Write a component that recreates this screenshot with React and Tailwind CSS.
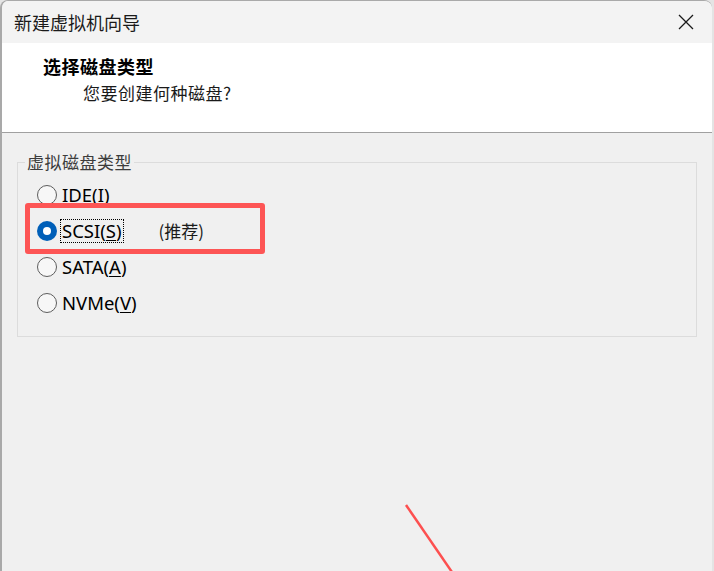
import { useState } from 'react';

const sans = { fontFamily: '"Noto Sans", "Noto Sans CJK SC", sans-serif' };

const options = [
  { id: 'ide', label: 'IDE(', key: 'I', tail: ')', underline: false },
  { id: 'scsi', label: 'SCSI(', key: 'S', tail: ')', underline: true, note: '(推荐)' },
  { id: 'sata', label: 'SATA(', key: 'A', tail: ')', underline: true },
  { id: 'nvme', label: 'NVMe(', key: 'V', tail: ')', underline: true },
];

const Radio = ({ checked }) =>
  checked ? (
    <span className="w-[20px] h-[20px] rounded-full bg-[#005fb8] flex items-center justify-center shrink-0">
      <span className="w-[8px] h-[8px] rounded-full bg-white" />
    </span>
  ) : (
    <span className="w-[20px] h-[20px] rounded-full border border-[#5d5d5d] bg-[#f7f7f7] shrink-0" />
  );

const App = () => {
  const [selected, setSelected] = useState('scsi');

  return (
    <div className="relative w-[714px] h-[571px] overflow-hidden bg-[#e4e4e4]">
      {/* Window */}
      <div className="w-[712px] h-full flex flex-col rounded-t-[8px] border-l-2 border-t border-[#a9a9a9] bg-[#f0f0f0] overflow-hidden">
        {/* Title bar */}
        <div className="h-[42px] shrink-0 bg-[#f3f3f3] flex items-center justify-between pl-[12px] pr-[18px]">
          <span className="text-[18px] text-[#1a1a1a] font-['Noto_Sans_CJK_SC',sans-serif]">新建虚拟机向导</span>
          <svg width="16" height="16" viewBox="0 0 16 16" className="text-[#1a1a1a]">
            <path d="M1 1 L15 15 M15 1 L1 15" stroke="currentColor" strokeWidth="1.3" fill="none" />
          </svg>
        </div>

        {/* Header */}
        <div className="h-[90px] shrink-0 bg-white border-b border-[#a0a0a0] pt-[11px] pl-[41px] font-['Noto_Sans_CJK_SC',sans-serif]">
          <div className="text-[18px] leading-[24px] font-bold text-black tracking-[0.5px]">选择磁盘类型</div>
          <div className="mt-[3px] ml-[40px] text-[17px] leading-[24px] text-[#1a1a1a] tracking-[0.5px]">您要创建何种磁盘?</div>
        </div>

        {/* Body */}
        <div className="flex-1 pt-[19px] pl-[15px] pr-[15px]">
          <fieldset className="border border-[#dcdcdc] pl-[19px] pb-[15px] pt-[5px]">
            <legend className="-ml-[12px] px-[2px] text-[17px] leading-[20px] text-[#3c3c3c] tracking-[0.5px] font-['Noto_Sans_CJK_SC',sans-serif]">
              虚拟磁盘类型
            </legend>
            {options.map((opt) => (
              <label
                key={opt.id}
                onClick={() => setSelected(opt.id)}
                className="h-9 flex items-center cursor-default"
              >
                <Radio checked={selected === opt.id} />
                <span
                  style={sans}
                  className={`ml-[4px] px-[1px] text-[18.5px] leading-[22px] text-black ${
                    selected === opt.id ? 'outline outline-1 outline-dotted outline-black' : ''
                  }`}
                >
                  {opt.label}
                  <span className={opt.underline ? 'underline underline-offset-2' : ''}>{opt.key}</span>
                  {opt.tail}
                </span>
                {opt.note && (
                  <span className="ml-[36px] text-[17px] text-[#1a1a1a] font-['Noto_Sans_CJK_SC',sans-serif]">
                    {opt.note}
                  </span>
                )}
              </label>
            ))}
          </fieldset>
        </div>
      </div>

      {/* Annotation: highlight box */}
      <div className="absolute left-[25px] top-[203px] w-[240px] h-[51px] border-[5px] border-[#fd5555] rounded-[3px] pointer-events-none" />

      {/* Annotation: arrow line */}
      <svg className="absolute left-0 top-0 pointer-events-none" width="714" height="571">
        <line x1="406" y1="505" x2="454" y2="575" stroke="#fd5050" strokeWidth="2.5" />
      </svg>
    </div>
  );
};

export default App;
